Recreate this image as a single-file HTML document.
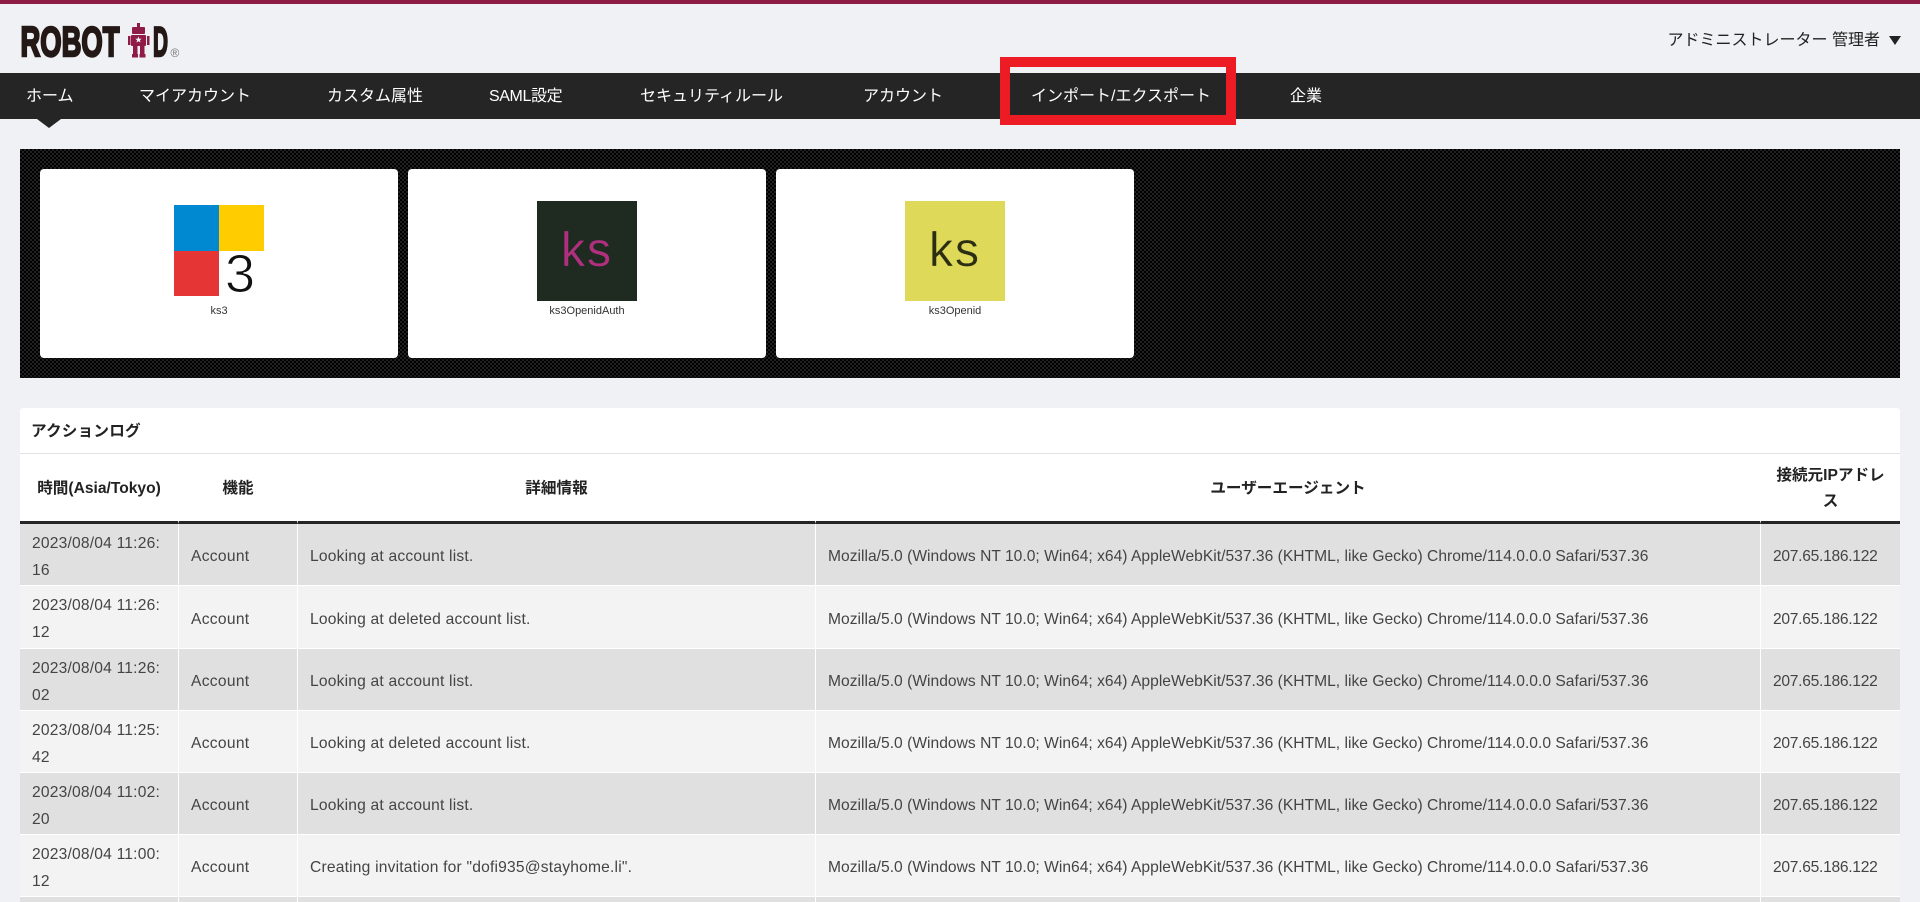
<!DOCTYPE html>
<html lang="ja">
<head>
<meta charset="utf-8">
<title>ROBOT ID</title>
<style>
html,body{margin:0;padding:0;width:1920px;height:902px;overflow:hidden;background:#f0f1f4;}
body{position:relative;font-family:"Liberation Sans","Noto Sans CJK JP",sans-serif;color:#333;}
.a{position:absolute;white-space:nowrap;}
#top{left:0;top:0;width:1920px;height:4px;background:#8f1c45;}
#nav{left:0;top:73px;width:1920px;height:46px;background:#252525;}
#caret{left:37px;top:119px;width:0;height:0;border-left:12px solid transparent;border-right:12px solid transparent;border-top:9px solid #252525;}
.n{top:74px;height:46px;line-height:46px;color:#fff;font-size:16px;}
#red{left:1000px;top:57px;width:216px;height:48px;border:10px solid #ed1c24;}
#user{right:40px;top:29px;line-height:24px;font-size:16px;color:#222;}
#tri{left:1889px;top:36px;width:0;height:0;border-left:6px solid transparent;border-right:6px solid transparent;border-top:9px solid #222;}
#band{left:20px;top:149px;width:1880px;height:229px;background-color:#0a0a0a;background-image:repeating-conic-gradient(#000 0 25%,#202020 0 50%);background-size:4px 4px;}
.card{top:169px;width:358px;height:189px;background:#fff;border-radius:4px;}
.lbl{top:303px;height:16px;line-height:16px;font-size:11px;color:#333;text-align:center;width:358px;}
.tile{top:201px;width:100px;height:100px;font-size:48px;line-height:100px;text-align:center;letter-spacing:2px;}
#panel{left:20px;top:408px;width:1880px;height:494px;background:#fff;border-radius:3px 3px 0 0;}
#title{left:31px;top:420px;line-height:24px;font-size:15.6px;letter-spacing:.2px;font-weight:bold;color:#222;}
#rule{left:20px;top:453px;width:1880px;height:1px;background:#e2e2e2;}
table{position:absolute;left:20px;top:454px;width:1880px;table-layout:fixed;border-collapse:separate;border-spacing:0;}
th{height:70px;padding:3px 10px 0;box-sizing:border-box;border-bottom:3px solid #252525;border-right:1px solid #fff;font-size:15.6px;line-height:26px;color:#222;text-align:center;font-weight:bold;background:#fff;}
th:last-child,td:last-child{border-right:0;}
td{padding:4px 12px 0;box-sizing:border-box;border-right:1px solid #fff;border-bottom:1px solid #fff;font-size:15.6px;line-height:27px;letter-spacing:.2px;color:#444;vertical-align:middle;}
tr.o td{background:#e0e0e0;}
tr.e td{background:#f3f3f3;}
td.ua{white-space:nowrap;letter-spacing:.02px;}
td.ip{letter-spacing:-.28px;white-space:nowrap;}
td.f{letter-spacing:.3px;}
tr.end td{padding:0;border-bottom:0;line-height:0;}
</style>
</head>
<body>
<div class="a" id="top"></div>

<svg class="a" style="left:0;top:0" width="200" height="70" viewBox="0 0 200 70">
  <text x="20.500" y="56" font-family="Liberation Sans" font-weight="bold" font-size="42" fill="#231815" stroke="#231815" stroke-width="2.4" textLength="99" lengthAdjust="spacingAndGlyphs">ROBOT</text>
  <g fill="#8f1c45">
    <rect x="137" y="23" width="3" height="4"/>
    <rect x="132" y="27" width="13" height="7" rx="1"/>
    <rect x="131" y="35" width="15" height="11" rx="1"/>
    <rect x="128" y="36" width="2.500" height="9"/>
    <rect x="147" y="36" width="2.500" height="9"/>
    <rect x="133" y="46" width="4.500" height="9"/>
    <rect x="140" y="46" width="4.500" height="9"/>
    <rect x="132" y="54" width="6" height="3.500"/>
    <rect x="139.500" y="54" width="6" height="3.500"/>
  </g>
  <polygon points="138.500,36.500 139.400,38.700 141.700,38.800 139.900,40.200 140.500,42.500 138.500,41.200 136.500,42.500 137.100,40.200 135.300,38.800 137.600,38.700" fill="#f0f1f4"/>
  <text x="153" y="56" font-family="Liberation Sans" font-weight="bold" font-size="42" fill="#231815" stroke="#231815" stroke-width="2.4" textLength="15" lengthAdjust="spacingAndGlyphs">D</text>
  <text x="170.500" y="57" font-family="Liberation Sans" font-size="12" fill="#777">®</text>
</svg>
<div class="a" id="user">アドミニストレーター 管理者</div>
<div class="a" id="tri"></div>

<div class="a" id="nav"></div>
<div class="a" id="caret"></div>
<div class="a n" style="left:26px">ホーム</div>
<div class="a n" style="left:139px">マイアカウント</div>
<div class="a n" style="left:327px">カスタム属性</div>
<div class="a n" style="left:489px;letter-spacing:-.4px">SAML設定</div>
<div class="a n" style="left:640px">セキュリティルール</div>
<div class="a n" style="left:863px">アカウント</div>
<div class="a n" style="left:1031px">インポート/エクスポート</div>
<div class="a n" style="left:1290px">企業</div>
<div class="a" id="red"></div>

<div class="a" id="band"></div>
<div class="a card" style="left:40px"></div>
<div class="a card" style="left:408px"></div>
<div class="a card" style="left:776px"></div>

<div class="a" style="left:174px;top:205px;width:45px;height:46px;background:#0088d0"></div>
<div class="a" style="left:219px;top:205px;width:45px;height:46px;background:#ffcc00"></div>
<div class="a" style="left:174px;top:251px;width:45px;height:45px;background:#e53535"></div>
<div class="a" style="left:222px;top:244px;width:36px;height:60px;line-height:60px;font-size:54px;text-align:center;color:#111;-webkit-text-stroke:1px #fff">3</div>
<div class="a lbl" style="left:40px">ks3</div>

<div class="a tile" style="left:537px;background:#1f2a20;color:#b0307f;-webkit-text-stroke:.3px #1f2a20">ks</div>
<div class="a lbl" style="left:408px">ks3OpenidAuth</div>

<div class="a tile" style="left:905px;background:#dfd95a;color:#2b2e12;-webkit-text-stroke:.3px #dfd95a">ks</div>
<div class="a lbl" style="left:776px">ks3Openid</div>

<div class="a" id="panel"></div>
<div class="a" id="title">アクションログ</div>
<div class="a" id="rule"></div>

<table>
<colgroup><col style="width:159px"><col style="width:119px"><col style="width:518px"><col style="width:945px"><col style="width:139px"></colgroup>
<thead><tr><th>時間(Asia/Tokyo)</th><th>機能</th><th>詳細情報</th><th>ユーザーエージェント</th><th>接続元IPアドレス</th></tr></thead>
<tbody>
<tr class="o" style="height:62px"><td>2023/08/04 11:26:<br>16</td><td class="f">Account</td><td>Looking at account list.</td><td class="ua">Mozilla/5.0 (Windows NT 10.0; Win64; x64) AppleWebKit/537.36 (KHTML, like Gecko) Chrome/114.0.0.0 Safari/537.36</td><td class="ip">207.65.186.122</td></tr>
<tr class="e" style="height:63px"><td>2023/08/04 11:26:<br>12</td><td class="f">Account</td><td>Looking at deleted account list.</td><td class="ua">Mozilla/5.0 (Windows NT 10.0; Win64; x64) AppleWebKit/537.36 (KHTML, like Gecko) Chrome/114.0.0.0 Safari/537.36</td><td class="ip">207.65.186.122</td></tr>
<tr class="o" style="height:62px"><td>2023/08/04 11:26:<br>02</td><td class="f">Account</td><td>Looking at account list.</td><td class="ua">Mozilla/5.0 (Windows NT 10.0; Win64; x64) AppleWebKit/537.36 (KHTML, like Gecko) Chrome/114.0.0.0 Safari/537.36</td><td class="ip">207.65.186.122</td></tr>
<tr class="e" style="height:62px"><td>2023/08/04 11:25:<br>42</td><td class="f">Account</td><td>Looking at deleted account list.</td><td class="ua">Mozilla/5.0 (Windows NT 10.0; Win64; x64) AppleWebKit/537.36 (KHTML, like Gecko) Chrome/114.0.0.0 Safari/537.36</td><td class="ip">207.65.186.122</td></tr>
<tr class="o" style="height:62px"><td>2023/08/04 11:02:<br>20</td><td class="f">Account</td><td>Looking at account list.</td><td class="ua">Mozilla/5.0 (Windows NT 10.0; Win64; x64) AppleWebKit/537.36 (KHTML, like Gecko) Chrome/114.0.0.0 Safari/537.36</td><td class="ip">207.65.186.122</td></tr>
<tr class="e" style="height:62px"><td>2023/08/04 11:00:<br>12</td><td class="f">Account</td><td>Creating invitation for "dofi935@stayhome.li".</td><td class="ua">Mozilla/5.0 (Windows NT 10.0; Win64; x64) AppleWebKit/537.36 (KHTML, like Gecko) Chrome/114.0.0.0 Safari/537.36</td><td class="ip">207.65.186.122</td></tr>
<tr class="o end" style="height:5px"><td></td><td></td><td></td><td></td><td></td></tr>
</tbody>
</table>
</body>
</html>
